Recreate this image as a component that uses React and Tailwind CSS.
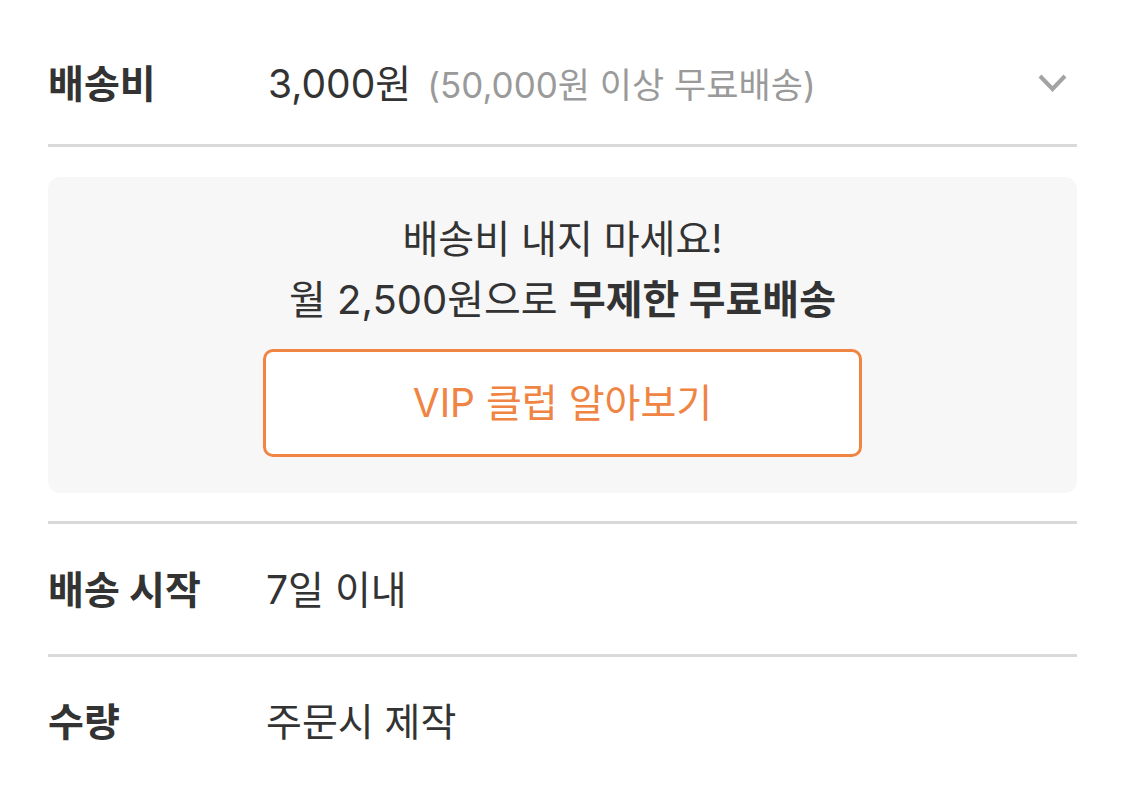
export default function App() {
  const font = { fontFamily: 'Inter, "Noto Sans CJK KR", "Noto Sans", sans-serif' };
  return (
    <div className="w-[1125px] h-[806px] bg-white px-[48px] pt-[22px] text-[#333333]" style={font}>
      <div className="flex items-center h-[122px]">
        <div className="w-[220px] text-[39px] font-bold leading-none">배송비</div>
        <div className="flex-1 flex items-baseline leading-none">
          <span className="text-[39px]">3,000원</span>
          <span className="ml-[16px] text-[35px] text-[#9a9a9a]">(50,000원 이상 무료배송)</span>
        </div>
        <svg width="29" height="18" viewBox="0 0 29 18" className="mr-[10px]">
          <polyline points="2,2 14.5,15 27,2" fill="none" stroke="#a3a3a3" strokeWidth="4" />
        </svg>
      </div>
      <div className="h-[3px] bg-[#d9d9d9]" />
      <div className="mt-[30px] h-[316px] rounded-[12px] bg-[#f7f7f7] flex flex-col items-center pt-[40px]">
        <div className="h-[42px] flex items-center text-[39px] leading-none">배송비 내지 마세요!</div>
        <div className="mt-[20px] h-[42px] flex items-center text-[40px] leading-none whitespace-pre">
          월 2,500원으로 <span className="font-bold">무제한 무료배송</span>
        </div>
        <div className="mt-[28px] w-[599px] h-[108px] rounded-[10px] border-[3px] border-[#ef8443] bg-white flex items-center justify-center pb-[2px] text-[39px] leading-none text-[#ef8443]">
          VIP 클럽 알아보기
        </div>
      </div>
      <div className="mt-[28px] h-[3px] bg-[#d9d9d9]" />
      <div className="flex items-center h-[130px]">
        <div className="w-[218px] text-[39px] font-bold leading-none">배송 시작</div>
        <div className="text-[39px] leading-none">7일 이내</div>
      </div>
      <div className="h-[3px] bg-[#d9d9d9]" />
      <div className="flex items-center h-[128px]">
        <div className="w-[218px] text-[39px] font-bold leading-none">수량</div>
        <div className="text-[39px] leading-none">주문시 제작</div>
      </div>
    </div>
  );
}
